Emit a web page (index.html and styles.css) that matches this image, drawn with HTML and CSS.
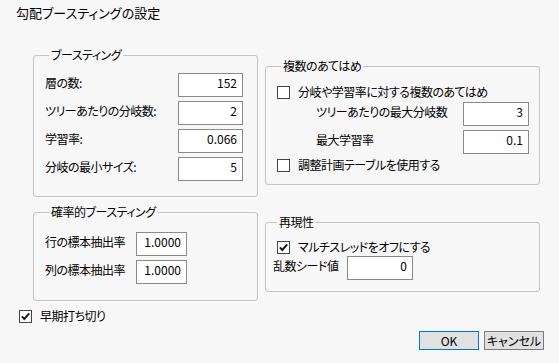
FILE: index.html
```html
<!DOCTYPE html>
<html lang="ja">
<head>
    <meta charset="UTF-8">
    <title>勾配ブースティングの設定</title>
    <link rel="stylesheet" href="styles.css">
</head>
<body>

<div class="dialog">
    <div class="title">勾配ブースティングの設定</div>

    <div class="panels">
        <div class="col col-left">
            <fieldset class="group boost">
                <legend>ブースティング</legend>
                <div class="rows">
                    <label>層の数:</label><input type="text" value="152">
                    <label>ツリーあたりの分岐数:</label><input type="text" value="2">
                    <label>学習率:</label><input type="text" value="0.066">
                    <label>分岐の最小サイズ:</label><input type="text" value="5">
                </div>
            </fieldset>

            <fieldset class="group stoch">
                <legend>確率的ブースティング</legend>
                <div class="rows">
                    <label>行の標本抽出率</label><input type="text" value="1.0000">
                    <label>列の標本抽出率</label><input type="text" value="1.0000">
                </div>
            </fieldset>
        </div>

        <div class="col col-right">
            <fieldset class="group multi">
                <legend>複数のあてはめ</legend>
                <div class="check"><span class="box"></span>分岐や学習率に対する複数のあてはめ</div>
                <div class="rows">
                    <label>ツリーあたりの最大分岐数</label><input type="text" value="3">
                    <label>最大学習率</label><input type="text" value="0.1">
                </div>
                <div class="check check-last"><span class="box"></span>調整計画テーブルを使用する</div>
            </fieldset>

            <fieldset class="group repro">
                <legend>再現性</legend>
                <div class="check"><span class="box"><svg viewBox="0 0 11 11" width="11" height="11"><path d="M1.8 5.4 L4.3 8 L9.2 2.3" fill="none" stroke="#1a1a1a" stroke-width="2"/></svg></span>マルチスレッドをオフにする</div>
                <div class="rows">
                    <label>乱数シード値</label><input type="text" value="0">
                </div>
            </fieldset>
        </div>
    </div>

    <div class="check early"><span class="box"><svg viewBox="0 0 11 11" width="11" height="11"><path d="M1.8 5.4 L4.3 8 L9.2 2.3" fill="none" stroke="#1a1a1a" stroke-width="2"/></svg></span>早期打ち切り</div>

    <div class="buttons">
        <button type="button" class="btn btn-ok">OK</button>
        <button type="button" class="btn">キャンセル</button>
    </div>
</div>

</body>
</html>
```

FILE: styles.css
```css
body {
    margin: 0;
    background-color: #f7f7f7;
    font-family: "Noto Sans CJK JP", "Noto Sans", sans-serif;
    font-size: 12px;
    color: #000;
    font-feature-settings: "palt";
    letter-spacing: -0.5px;
}
.dialog {
    width: 559px;
    height: 363px;
}
.title {
    padding: 4px 0 0 16px;
    font-size: 13px;
    line-height: 18px;
    letter-spacing: 0;
}
.panels {
    display: flex;
    gap: 7px;
    padding-left: 33px;
    margin-top: 25px;
}
.col {
    display: flex;
    flex-direction: column;
}
.col-left {
    width: 225px;
}
.col-right {
    width: 275px;
    margin-top: 11px;
}
.group {
    margin: 0;
    border: 1px solid #c4c4c4;
    border-radius: 3px;
    min-width: 0;
}
.group legend {
    padding: 0 2px;
    margin-left: 4px;
    line-height: 16px;
}
.rows {
    display: grid;
    row-gap: 4px;
    align-items: start;
}
.rows label {
    line-height: 16px;
    padding-top: 2px;
}
input {
    height: 24px;
    box-sizing: border-box;
    border: 1px solid #8a8a8a;
    background-color: #fff;
    padding: 0 5px 6px 5px;
    margin: 0;
    font: inherit;
    letter-spacing: 0;
    text-align: right;
    color: #000;
}
.boost {
    padding: 10px 14px 15px 11px;
}
.boost .rows {
    grid-template-columns: 1fr 65px;
}
.stoch {
    margin-top: 7px;
    padding: 12px 0 16px 11px;
}
.stoch .rows {
    grid-template-columns: 91px 51px;
}
.multi {
    padding: 10px 10px 11px 11px;
}
.multi .rows {
    grid-template-columns: 1fr 66px;
    margin-top: 2px;
}
.multi .rows label {
    padding-left: 39px;
}
.repro {
    margin-top: 29px;
    padding: 9px 0 11px 7px;
}
.repro .check {
    margin-left: 4px;
}
.repro .rows {
    grid-template-columns: 74px 66px;
    margin-top: 1px;
}
.check {
    display: flex;
    align-items: center;
    height: 16px;
    line-height: 16px;
}
.check-last {
    margin-top: 3px;
}
.box {
    width: 11px;
    height: 11px;
    border: 1px solid #444;
    background-color: #fff;
    margin-right: 8px;
    display: flex;
    align-items: center;
    justify-content: center;
}
.early {
    margin: 7px 0 0 19px;
    height: 16px;
}
.buttons {
    display: flex;
    justify-content: flex-end;
    gap: 5px;
    padding-right: 15px;
    margin-top: 7px;
}
.btn {
    width: 60px;
    height: 19px;
    padding: 0;
    font: inherit;
    line-height: 16px;
    color: #000;
    background-color: #e1e1e1;
    border: 1px solid #7a7a7a;
}
.btn-ok {
    border-color: #0078d7;
}
```
